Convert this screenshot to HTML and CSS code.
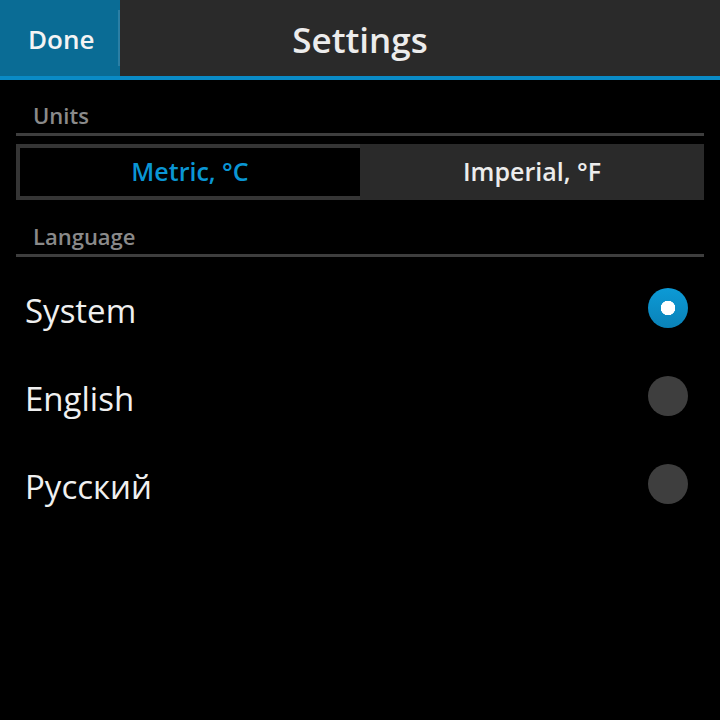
FILE: index.html
```html
<!DOCTYPE html>
<html lang="en">
<head>
<meta charset="utf-8">
<title>Settings</title>
<link rel="stylesheet" href="styles.css">
</head>
<body>
<div class="screen">
  <header class="titlebar">
    <div class="done"><span class="done-label">Done</span></div>
    <h1 class="title">Settings</h1>
    <div class="spacer"></div>
  </header>
  <main class="content">
    <section class="section">
      <div class="section-label">Units</div>
      <div class="segmented">
        <div class="segment segment-selected">Metric, °C</div>
        <div class="segment">Imperial, °F</div>
      </div>
    </section>
    <section class="section">
      <div class="section-label">Language</div>
      <ul class="options">
        <li class="option"><span class="option-text">System</span><span class="radio radio-on"></span></li>
        <li class="option"><span class="option-text">English</span><span class="radio"></span></li>
        <li class="option"><span class="option-text">Русский</span><span class="radio"></span></li>
      </ul>
    </section>
  </main>
</div>
</body>
</html>
```
FILE: styles.css
```css
html, body {
  margin: 0;
  padding: 0;
  background: #000;
}
body {
  font-family: "Open Sans", "Liberation Sans", sans-serif;
  color: #f2f2f2;
  width: 720px;
  height: 720px;
  overflow: hidden;
}
.screen {
  display: flex;
  flex-direction: column;
}
.titlebar {
  display: grid;
  grid-template-columns: 120px 1fr 120px;
  height: 76px;
  background: #2a2a2a;
  border-bottom: 4px solid #0a8bc6;
}
.done {
  background: #0a6c95;
  display: flex;
  align-items: center;
  box-sizing: border-box;
  padding-left: 28px;
  border-right: 2px solid #0a6c95;
  position: relative;
}
.done::after {
  content: "";
  position: absolute;
  right: -2px;
  top: 10px;
  bottom: 10px;
  width: 2px;
  background: #2b7fa5;
}
.done-label {
  font-size: 26px;
  font-weight: 600;
  color: #f4f4f4;
  line-height: 1;
  margin-top: 1px;
}
.title {
  margin: 0;
  display: flex;
  align-items: center;
  justify-content: center;
  font-size: 35px;
  font-weight: 600;
  color: #ececec;
  line-height: 1;
  padding-top: 2px;
}
.content {
  padding: 0 16px;
}
.section-label {
  height: 56px;
  box-sizing: border-box;
  padding: 24px 0 0 17px;
  font-size: 22px;
  font-weight: 600;
  color: #8a8a8a;
  line-height: 1;
  border-bottom: 3px solid #3e3e3e;
}
.section + .section .section-label {
  height: 57px;
  padding-top: 25px;
}
.segmented {
  display: grid;
  grid-template-columns: 1fr 1fr;
  height: 56px;
  margin-top: 8px;
  background: #2a2a2a;
}
.segment {
  display: flex;
  align-items: center;
  justify-content: center;
  font-size: 25px;
  font-weight: 600;
  color: #ececec;
  padding-bottom: 2px;
}
.segment-selected {
  background: #000;
  border: 4px solid #353535;
  border-right: none;
  color: #0a96d4;
}
.options {
  list-style: none;
  margin: 0;
  padding: 7px 0 0;
}
.option {
  display: flex;
  align-items: center;
  justify-content: space-between;
  height: 88px;
  padding: 0 16px 0 9px;
}
.option-text {
  font-size: 33px;
  font-weight: 400;
  color: #f0f0f0;
  padding-top: 4px;
}
.radio {
  width: 40px;
  height: 40px;
  border-radius: 50%;
  background: #3e3e3e;
  box-sizing: border-box;
}
.radio-on {
  background: radial-gradient(circle, #ffffff 0 7px, transparent 7.5px), linear-gradient(#0c9ad6, #0a82b8);
}
```
